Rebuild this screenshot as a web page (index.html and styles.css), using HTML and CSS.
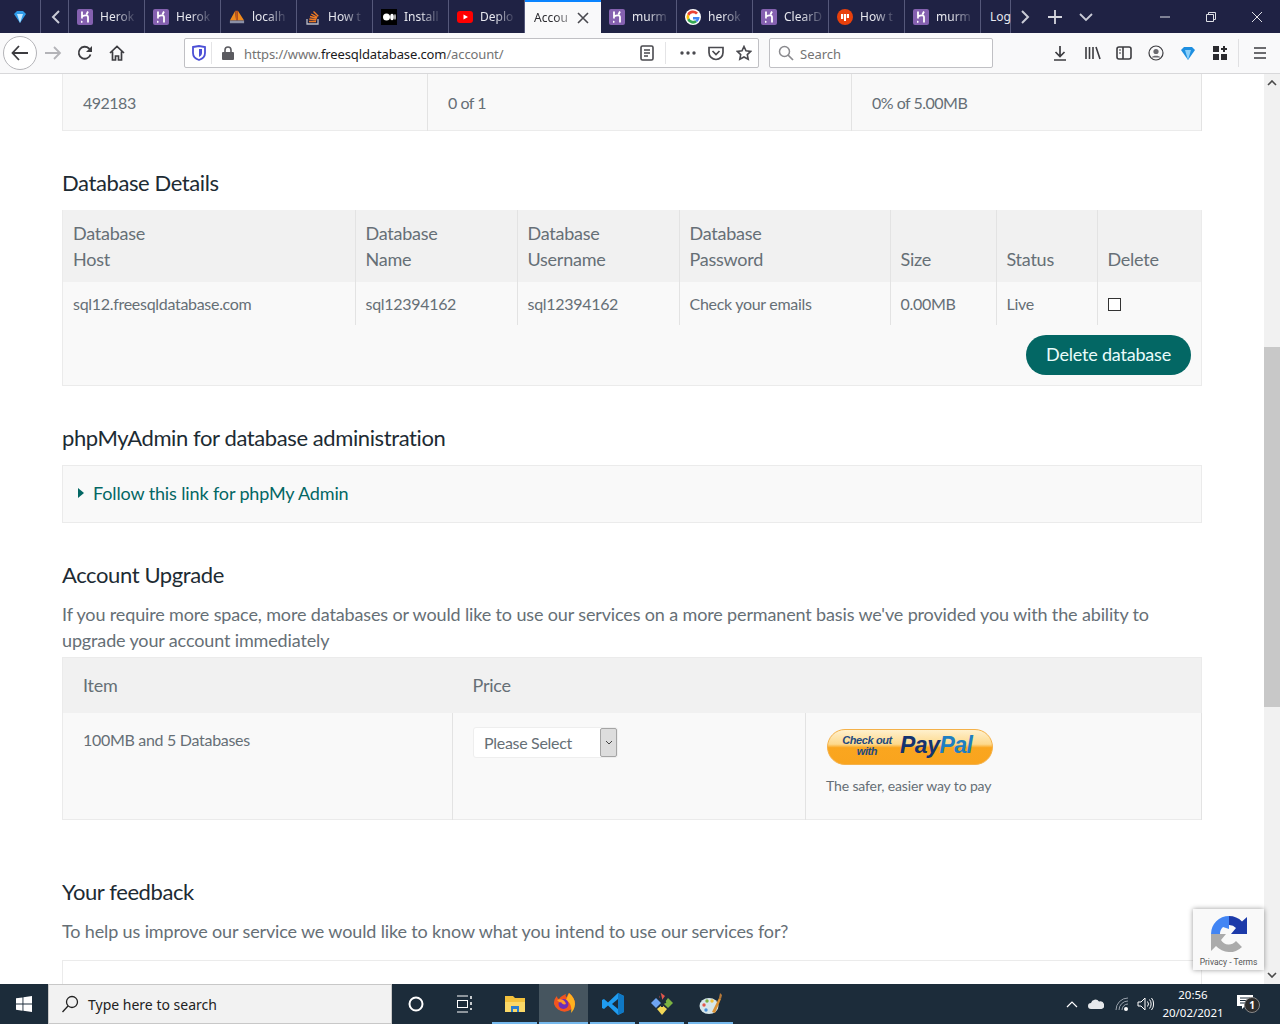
FILE: index.html
```html
<!DOCTYPE html>
<html lang="en">
<head>
  <meta charset="UTF-8">
  <title>Account - freesqldatabase.com</title>
  <link rel="stylesheet" href="styles.css">
</head>
<body>
  <svg class="defs" width="0" height="0">
    <symbol id="heroku" viewBox="0 0 16 16">
      <rect width="16" height="16" rx="2" fill="#8561b0"/>
      <path d="M5 2.500v7M5 7.500c2-1 6-2 6 .5v5.500M11 2.500L9.500 5.500" fill="none" stroke="#fff" stroke-width="1.800"/>
      <path d="M4 11.500l2.200 1.400L4 14z" fill="#fff"/>
    </symbol>
  </svg>

  <!-- tabs -->
  <div class="tabbar">
    <div class="pinned">
      <svg width="16" height="16" viewBox="0 0 16 16"><path d="M2 5l3-3h6l3 3-6 9z" fill="#2f9be8"/><path d="M5 5h6l-3 9z" fill="#bfe6ff"/></svg>
    </div>
    <div class="scroll-btn">
      <svg width="12" height="16" viewBox="0 0 12 16"><path d="M9 2L3 8l6 6" fill="none" stroke="#c9cbd6" stroke-width="2"/></svg>
    </div>
    <div class="tab"><svg width="16" height="16"><use href="#heroku"/></svg><span>Herok</span></div>
    <div class="tab"><svg width="16" height="16"><use href="#heroku"/></svg><span>Herok</span></div>
    <div class="tab">
      <svg width="16" height="16" viewBox="0 0 18 16"><path d="M1 12L7 1l1 11zM10 12l0-11 7 11z" fill="#f08a1d"/><path d="M7 1l3 0v11H8z" fill="#c4561a"/><rect x="1" y="12" width="16" height="3" fill="#8a8fa6"/></svg>
      <span>localh</span>
    </div>
    <div class="tab">
      <svg width="16" height="16" viewBox="0 0 16 16"><path d="M2 10v5h11v-5" fill="none" stroke="#b9bcc6" stroke-width="1.300"/><path d="M4 12.500h7M4.300 10l7 .8M5 7.500l6.800 1.800M6.300 5l6 3.300M8.500 2.500l4.800 4.800" stroke="#ef7b24" stroke-width="1.400"/></svg>
      <span>How t</span>
    </div>
    <div class="tab">
      <svg width="16" height="16" viewBox="0 0 16 16"><rect width="16" height="16" fill="#000"/><ellipse cx="5.500" cy="8" rx="3.500" ry="3.500" fill="#fff"/><ellipse cx="11" cy="8" rx="1.800" ry="3.200" fill="#fff"/><ellipse cx="14" cy="8" rx=".7" ry="3" fill="#fff"/></svg>
      <span>Install</span>
    </div>
    <div class="tab">
      <svg width="16" height="16" viewBox="0 0 16 16"><rect y="2" width="16" height="12" rx="3" fill="#f00"/><path d="M6.500 5.500L11 8l-4.500 2.500z" fill="#fff"/></svg>
      <span>Deplo</span>
    </div>
    <div class="tab tab-active"><span>Accou</span>
      <svg class="tab-close" width="12" height="12" viewBox="0 0 12 12"><path d="M1 1l10 10M11 1L1 11" stroke="#4a4a50" stroke-width="1.600"/></svg>
    </div>
    <div class="tab"><svg width="16" height="16"><use href="#heroku"/></svg><span>murm</span></div>
    <div class="tab">
      <svg width="16" height="16" viewBox="0 0 16 16"><circle cx="8" cy="8" r="8" fill="#fff"/><path d="M13 3.800A6.500 6.500 0 0 0 2.200 5l2.200 1.700A3.900 3.900 0 0 1 11 5.600z" fill="#ea4335"/><path d="M2.200 5a6.500 6.500 0 0 0 0 6l2.200-1.700a3.900 3.900 0 0 1 0-2.600z" fill="#fbbc05"/><path d="M2.200 11a6.500 6.500 0 0 0 10 2.100L10 11.300a3.900 3.900 0 0 1-5.600-2z" fill="#34a853"/><path d="M14.500 8H8v2.500h3.700A3 3 0 0 1 10 11.300l2.200 1.800c1.500-1.300 2.300-3 2.300-5.100z" fill="#4285f4"/></svg>
      <span>herok</span>
    </div>
    <div class="tab"><svg width="16" height="16"><use href="#heroku"/></svg><span>ClearD</span></div>
    <div class="tab">
      <svg width="16" height="16" viewBox="0 0 16 16"><circle cx="8" cy="8" r="8" fill="#e8400c"/><path d="M4 5h2.200v5H4zM7 5h2v7H7zM9.800 5H12v4H9.800z" fill="#fff"/></svg>
      <span>How t</span>
    </div>
    <div class="tab"><svg width="16" height="16"><use href="#heroku"/></svg><span>murm</span></div>
    <div class="tab tab-cut"><span>Log</span></div>
    <div class="tab-tools">
      <svg width="12" height="16" viewBox="0 0 12 16"><path d="M3 2l6 6-6 6" fill="none" stroke="#c9cbd6" stroke-width="2"/></svg>
      <svg width="14" height="14" viewBox="0 0 14 14"><path d="M7 0v14M0 7h14" stroke="#d5d6de" stroke-width="1.800"/></svg>
      <svg width="14" height="10" viewBox="0 0 14 10"><path d="M1 2l6 6 6-6" fill="none" stroke="#c9cbd6" stroke-width="1.800"/></svg>
    </div>
    <div class="win-btns">
      <svg width="12" height="12" viewBox="0 0 12 12"><path d="M1 6h10" stroke="#dfe0e6"/></svg>
      <svg width="12" height="12" viewBox="0 0 12 12"><path d="M3.500 3V1.500h7v7H9M1.500 3.500h7v7h-7z" fill="none" stroke="#dfe0e6"/></svg>
      <svg width="12" height="12" viewBox="0 0 12 12"><path d="M1 1l10 10M11 1L1 11" stroke="#dfe0e6"/></svg>
    </div>
  </div>

  <!-- toolbar -->
  <div class="toolbar">
    <div class="back-btn">
      <svg width="18" height="16" viewBox="0 0 18 16"><path d="M8 1L1.500 8 8 15M2 8h15" fill="none" stroke="#3c3c40" stroke-width="1.800"/></svg>
    </div>
    <svg class="tool fwd" width="18" height="16" viewBox="0 0 18 16"><path d="M10 2l6 6-6 6M16 8H1" fill="none" stroke="#b4b4b8" stroke-width="1.800"/></svg>
    <svg class="tool reload" width="16" height="16" viewBox="0 0 16 16"><path d="M13.500 9.500A6 6 0 1 1 12 3.500L14 6" fill="none" stroke="#3c3c40" stroke-width="1.800"/><path d="M15 1v6H9z" fill="#3c3c40"/></svg>
    <svg class="tool home" width="16" height="16" viewBox="0 0 16 16"><path d="M1 8l7-6.500L15 8M3.500 6.500V15h3v-4h3v4h3V6.500" fill="none" stroke="#3c3c40" stroke-width="1.700"/></svg>
    <div class="urlbar">
      <svg class="shield" width="14" height="16" viewBox="0 0 14 16"><path d="M1 2l6-1 6 1v6c0 4-3 6-6 7-3-1-6-3-6-7z" fill="none" stroke="#4b4fd6" stroke-width="1.800"/><path d="M7 4h3v4c0 2-1.500 3-3 4z" fill="#4b4fd6"/></svg>
      <span class="url-sep"></span>
      <svg class="lock" width="12" height="14" viewBox="0 0 12 14"><path d="M3 6V4a3 3 0 0 1 6 0v2" fill="none" stroke="#5b5b60" stroke-width="1.600"/><rect y="6" width="12" height="8" rx="1" fill="#5b5b60"/></svg>
      <span class="url-text">https://www.<b>freesqldatabase.com</b>/account/</span>
      <svg class="reader" width="14" height="16" viewBox="0 0 14 16"><rect x="1" y="1" width="12" height="14" rx="1.500" fill="none" stroke="#4a4a4f" stroke-width="1.600"/><path d="M4 5h6M4 8h6M4 11h4" stroke="#4a4a4f" stroke-width="1.300"/></svg>
      <span class="url-sep sep-wide"></span>
      <svg class="dots" width="16" height="4" viewBox="0 0 16 4"><circle cx="2" cy="2" r="1.700" fill="#4a4a4f"/><circle cx="8" cy="2" r="1.700" fill="#4a4a4f"/><circle cx="14" cy="2" r="1.700" fill="#4a4a4f"/></svg>
      <svg class="pocket" width="16" height="16" viewBox="0 0 16 16"><path d="M1 2.500h14v5a7 7 0 0 1-14 0z" fill="none" stroke="#4a4a4f" stroke-width="1.700"/><path d="M4.500 6L8 9.500 11.500 6" fill="none" stroke="#4a4a4f" stroke-width="1.700"/></svg>
      <svg class="star" width="16" height="16" viewBox="0 0 16 16"><path d="M8 1.500l2 4.300 4.700.6-3.400 3.200.9 4.700L8 12l-4.200 2.300.9-4.700L1.300 6.400 6 5.800z" fill="none" stroke="#4a4a4f" stroke-width="1.600"/></svg>
    </div>
    <div class="searchbar">
      <svg width="16" height="16" viewBox="0 0 16 16"><circle cx="6.500" cy="6.500" r="5" fill="none" stroke="#8a8a8e" stroke-width="1.500"/><path d="M10 10l5 5" stroke="#8a8a8e" stroke-width="1.700"/></svg>
      <span>Search</span>
    </div>
    <div class="tool-right">
      <svg width="16" height="16" viewBox="0 0 16 16"><path d="M8 1v10M3.500 7L8 11.500 12.500 7M2 15h12" fill="none" stroke="#3c3c40" stroke-width="1.700"/></svg>
      <svg width="17" height="16" viewBox="0 0 17 16"><path d="M2 2v12M5.500 2v12M9 2v12M12 2l4 12" fill="none" stroke="#3c3c40" stroke-width="1.600"/></svg>
      <svg class="sidebar-icon" width="16" height="14" viewBox="0 0 16 14"><rect x="1" y="1" width="14" height="12" rx="2" fill="none" stroke="#3c3c40" stroke-width="1.600"/><path d="M7 1v12" stroke="#3c3c40" stroke-width="1.600"/><path d="M3 4h2M3 7h2" stroke="#3c3c40"/></svg>
      <svg width="16" height="16" viewBox="0 0 16 16"><circle cx="8" cy="8" r="7" fill="none" stroke="#3c3c40" stroke-width="1.200"/><circle cx="8" cy="6.500" r="2.600" fill="#6a6a70"/><path d="M3.500 12.500c1-2.500 8-2.500 9 0z" fill="#6a6a70"/></svg>
      <svg width="16" height="16" viewBox="0 0 16 16"><path d="M1 5l3-3h8l3 3-7 10z" fill="#1e8fe0"/><path d="M5 5h6l-3 10z" fill="#8bd0fa"/></svg>
      <svg width="16" height="16" viewBox="0 0 16 16"><path d="M1 1h6v6H1zM1 9h6v6H1zM9 9h6v6H9z" fill="#2a2a2e"/><path d="M12 1v6M9 4h6" stroke="#2a2a2e" stroke-width="2"/></svg>
      <span class="tool-sep"></span>
      <svg class="menu-icon" width="14" height="12" viewBox="0 0 14 12"><path d="M1 1h12M1 6h12M1 11h12" stroke="#3c3c40" stroke-width="1.700"/></svg>
    </div>
  </div>

  <!-- page -->
  <div class="viewport">
    <div class="page">
      <table class="data stats">
        <tr>
          <td class="w-a">492183</td>
          <td class="w-b">0 of 1</td>
          <td>0% of 5.00MB</td>
        </tr>
      </table>

      <h2 class="h-details">Database Details</h2>
      <div class="details-box">
        <table class="data details">
          <tr>
            <th class="c1">Database<br>Host</th>
            <th class="c2">Database<br>Name</th>
            <th class="c3">Database<br>Username</th>
            <th class="c4">Database<br>Password</th>
            <th class="c5">Size</th>
            <th class="c6">Status</th>
            <th>Delete</th>
          </tr>
          <tr>
            <td>sql12.freesqldatabase.com</td>
            <td>sql12394162</td>
            <td>sql12394162</td>
            <td>Check your emails</td>
            <td>0.00MB</td>
            <td>Live</td>
            <td><span class="checkbox"></span></td>
          </tr>
        </table>
        <div class="box-foot"><a class="btn" href="#">Delete database</a></div>
      </div>

      <h2 class="h-php">phpMyAdmin for database administration</h2>
      <div class="link-box">
        <span class="arrow"></span>
        <a href="#">Follow this link for phpMy Admin</a>
      </div>

      <h2 class="h-upgrade">Account Upgrade</h2>
      <p class="lead">If you require more space, more databases or would like to use our services on a more permanent basis we've provided you with the ability to upgrade your account immediately</p>
      <table class="data upgrade">
        <tr>
          <th class="u1">Item</th>
          <th class="u2">Price</th>
          <th></th>
        </tr>
        <tr>
          <td>100MB and 5 Databases</td>
          <td>
            <div class="select">
              <span>Please Select</span>
              <span class="select-btn"><svg width="8" height="5" viewBox="0 0 8 5"><path d="M1 1l3 3 3-3" fill="none" stroke="#444"/></svg></span>
            </div>
          </td>
          <td>
            <svg class="paypal" width="166" height="36" viewBox="0 0 166 36">
              <defs>
                <linearGradient id="pp" x1="0" y1="0" x2="0" y2="1">
                  <stop offset="0" stop-color="#fff1cf"/>
                  <stop offset=".42" stop-color="#fdd98c"/>
                  <stop offset=".52" stop-color="#faa61f"/>
                  <stop offset="1" stop-color="#f9a41e"/>
                </linearGradient>
              </defs>
              <rect x=".5" y=".5" width="165" height="35" rx="17.500" fill="url(#pp)" stroke="#f4b14a"/>
              <text x="40" y="15" class="pp-small" text-anchor="middle">Check out</text>
              <text x="40" y="26" class="pp-small" text-anchor="middle">with</text>
              <text x="73" y="24" class="pp-logo"><tspan fill="#14336f">Pay</tspan><tspan fill="#1f7fc1">Pal</tspan></text>
            </svg>
            <p class="pp-note">The safer, easier way to pay</p>
          </td>
        </tr>
      </table>

      <h2 class="h-feedback">Your feedback</h2>
      <p class="lead one">To help us improve our service we would like to know what you intend to use our services for?</p>
      <div class="feedback-box"></div>
    </div>

    <div class="scrollbar">
      <svg class="sb-arrow" width="10" height="6" viewBox="0 0 10 6"><path d="M1 5l4-4 4 4" fill="none" stroke="#4a4a4a" stroke-width="1.600"/></svg>
      <div class="sb-thumb"></div>
      <svg class="sb-arrow" width="10" height="6" viewBox="0 0 10 6"><path d="M1 1l4 4 4-4" fill="none" stroke="#4a4a4a" stroke-width="1.600"/></svg>
    </div>

    <div class="recaptcha">
      <svg width="38" height="38" viewBox="0 0 38 38">
        <path d="M19 1A18 18 0 0 1 32 6.500L37 2V19H21L26 13A9 9 0 0 0 19 10Z" fill="#1c3aa9"/>
        <path d="M19 1A18 18 0 0 0 1 19H10A9 9 0 0 1 13 12L19 14V1Z" fill="#4285f4"/>
        <path d="M1 19H16L11 25A9 9 0 0 0 26 26L32 32A18 18 0 0 1 6 31L1 36Z" fill="#ababab"/>
      </svg>
      <div class="rc-links">Privacy - Terms</div>
    </div>
  </div>

  <!-- taskbar -->
  <div class="taskbar">
    <div class="start">
      <svg width="16" height="16" viewBox="0 0 16 16"><path d="M0 2.300l6.500-.9v6.200H0zM7.400 1.300L16 0v7.600H7.400zM0 8.500h6.500v6.200L0 13.700zM7.400 8.500H16V16l-8.600-1.200z" fill="#fff"/></svg>
    </div>
    <div class="task-search">
      <svg width="18" height="18" viewBox="0 0 18 18"><circle cx="11" cy="7" r="5.500" fill="none" stroke="#222" stroke-width="1.300"/><path d="M7 11l-5.500 6" stroke="#222" stroke-width="1.300"/></svg>
      <span>Type here to search</span>
    </div>
    <div class="task-item cortana">
      <svg width="16" height="16" viewBox="0 0 16 16"><circle cx="8" cy="8" r="6.500" fill="none" stroke="#fff" stroke-width="2"/></svg>
    </div>
    <div class="task-item view-item">
      <svg width="16" height="18" viewBox="0 0 16 18"><path d="M1 1h11M1 17h11" stroke="#fff"/><rect x="1.500" y="5.500" width="10" height="7" fill="none" stroke="#fff"/><path d="M15 1v3M15 7v3M15 13v2" stroke="#fff" stroke-width="1.500"/></svg>
    </div>
    <div class="task-item running">
      <svg width="22" height="20" viewBox="0 0 22 20"><path d="M1 2h8l2 2h10v14H1z" fill="#f3c13c"/><path d="M1 8h20v10H1z" fill="#fad867"/><path d="M7 12h8v6h-2v-3H9v3H7z" fill="#2a7fd0"/></svg>
    </div>
    <div class="task-item running active">
      <svg width="24" height="24" viewBox="0 0 24 24"><path d="M2 12C2 7 4 5 5 4c0 2 1 3 2 3 2-3 5-4 7-5-1 2 0 3 1 3 0-1 1-3 2-4 4 3 6 7 6 11a11 11 0 0 1-21 0z" fill="#f2551f"/><path d="M17 1c4 3 6 7 6 11 0 4-2 7-4 9 1-5 0-10-5-13z" fill="#ffb11f"/><circle cx="11.500" cy="12" r="5" fill="#6f2db8"/><path d="M5 8c4-2 8 0 9 4-2 1-4 0-5-2-1 1-2 0-4-2z" fill="#ff9a2a"/></svg>
    </div>
    <div class="task-item running">
      <svg width="24" height="24" viewBox="0 0 24 24"><path d="M17 1l6 3v16l-6 3L7 13.500 3 17l-2-1v-8l2-1 4 3.500z" fill="#1f9cf0"/><path d="M17 7l-6 5 6 5z" fill="#1c2c3a"/><path d="M17 1l6 3v16l-6 3z" fill="#0f78c4"/></svg>
    </div>
    <div class="task-item running">
      <svg width="24" height="24" viewBox="0 0 24 24"><path d="M11 1l4 3-3 4-3-3z" fill="#e2574c"/><path d="M6 6l5 5-5 5-5-5z" fill="#6ea4f0"/><path d="M18 6l5 5-5 5-4-4 1-2z" fill="#7cb342"/><path d="M7 17l5-4 5 4-5 6z" fill="#f2d757"/><path d="M10 2l2 9v4" fill="none" stroke="#1c2c3a" stroke-width="2"/><path d="M12 11l4-1" stroke="#1c2c3a" stroke-width="2"/></svg>
    </div>
    <div class="task-item running">
      <svg width="24" height="24" viewBox="0 0 24 24"><ellipse cx="10" cy="14" rx="9.500" ry="8" fill="#d6e6ea"/><circle cx="5" cy="13" r="1.700" fill="#e2574c"/><circle cx="8" cy="9" r="1.700" fill="#7cb342"/><circle cx="13" cy="9" r="1.700" fill="#f2c037"/><circle cx="7" cy="18" r="1.700" fill="#4a90d9"/><path d="M13 20L20 6l2 1-6 14z" fill="#d99033"/><path d="M20 6l1-5 2 2-1 4z" fill="#b5793a"/></svg>
    </div>
    <div class="tray">
      <svg width="12" height="8" viewBox="0 0 12 8"><path d="M1 7l5-5 5 5" fill="none" stroke="#fff" stroke-width="1.200"/></svg>
      <svg width="16" height="10" viewBox="0 0 16 10"><path d="M3 10a3 3 0 0 1 0-6 4.500 4.500 0 0 1 8-1.500A3.500 3.500 0 0 1 13.500 10z" fill="#e6e8eb"/></svg>
      <svg class="tray-wifi" width="14" height="14" viewBox="0 0 14 14"><path d="M1 13A12 12 0 0 1 13 1M4 13a9 9 0 0 1 9-9M7 13a6 6 0 0 1 6-6" fill="none" stroke="#9aa3ad"/><circle cx="11" cy="12" r="2" fill="#fff"/></svg>
      <svg width="17" height="14" viewBox="0 0 17 14"><path d="M1 5v4h3l4 4V1L4 5z" fill="none" stroke="#fff"/><path d="M10.500 4.500a4 4 0 0 1 0 5M12.500 2.500a7 7 0 0 1 0 9M14.500 1a9.500 9.500 0 0 1 0 12" fill="none" stroke="#fff"/></svg>
      <div class="clock"><div>20:56</div><div>20/02/2021</div></div>
      <div class="notify">
        <svg width="16" height="15" viewBox="0 0 16 15"><path d="M0 0h16v11H8l-3 3v-3H0z" fill="#fff"/><path d="M3 3h10M3 5.500h10M3 8h10" stroke="#1c2c3a"/></svg>
        <span class="notify-count">1</span>
      </div>
    </div>
  </div>
</body>
</html>
```

FILE: styles.css
```css
* {
  box-sizing: border-box;
}
html,
body {
  height: 100%;
}
body {
  margin: 0;
  width: 1280px;
  height: 1024px;
  overflow: hidden;
  display: flex;
  flex-direction: column;
  font-family: "Lato", "Liberation Sans", sans-serif;
  background-color: #fff;
}
.defs {
  position: absolute;
}

/* tab strip */
.tabbar {
  height: 40px;
  margin-bottom: -7px;
  display: flex;
  background-color: #1f2244;
  color: #e6e7ee;
  font-family: "Noto Sans", sans-serif;
  font-size: 12px;
}
.tabbar > div {
  height: 33px;
}
.pinned {
  width: 41px;
  padding-left: 12px;
  display: flex;
  align-items: center;
  border-right: 1px solid #55587a;
}
.scroll-btn {
  width: 28px;
  padding-left: 9px;
  display: flex;
  align-items: center;
  border-right: 1px solid #55587a;
}
.tab {
  width: 76px;
  flex: none;
  padding-left: 8px;
  display: flex;
  align-items: center;
  gap: 7px;
  border-right: 1px solid #55587a;
}
.tab svg {
  flex: none;
}
.tab span {
  white-space: nowrap;
  -webkit-mask-image: linear-gradient(to right, #000 45%, rgba(0, 0, 0, .15));
  mask-image: linear-gradient(to right, #000 45%, rgba(0, 0, 0, .15));
}
.tab-active {
  background-color: #f9f9fa;
  color: #2a2a2e;
  border-top: 2px solid #0a84ff;
  border-right: 0;
  padding-left: 9px;
  gap: 0;
}
.tab-active span {
  width: 43px;
}
.tab-cut {
  width: 30px;
  padding-left: 9px;
}
.tab-cut span {
  -webkit-mask-image: none;
  mask-image: none;
}
.tab-tools {
  width: 100px;
  padding-left: 8px;
  display: flex;
  align-items: center;
  gap: 17px;
}
.win-btns {
  margin-left: auto;
  padding-right: 17px;
  display: flex;
  align-items: center;
  gap: 34px;
}

/* nav toolbar */
.toolbar {
  height: 41px;
  flex: none;
  position: relative;
  display: flex;
  align-items: center;
  background-color: #f9f9fa;
  border-bottom: 1px solid #d8d8da;
}
.back-btn {
  width: 34px;
  height: 34px;
  margin-left: 3px;
  display: flex;
  align-items: center;
  justify-content: center;
  background-color: #fff;
  border: 1px solid #b4b4b8;
  border-radius: 50%;
}
.tool {
  flex: none;
}
.fwd {
  margin-left: 7px;
}
.reload {
  margin-left: 15px;
}
.home {
  margin-left: 16px;
}
.urlbar {
  width: 575px;
  height: 30px;
  margin-left: 59px;
  padding-left: 7px;
  display: flex;
  align-items: center;
  background-color: #fff;
  border: 1px solid #c0c0c4;
  border-radius: 2px;
  font-size: 13px;
  color: #737373;
  font-family: "Noto Sans", sans-serif;
}
.url-sep {
  width: 1px;
  height: 22px;
  margin-left: 5px;
  background-color: #e4e4e6;
}
.lock {
  margin-left: 10px;
}
.url-text {
  margin-left: 10px;
  margin-top: 2px;
  width: 396px;
  white-space: nowrap;
  letter-spacing: -.12px;
}
.url-text b {
  font-weight: 400;
  color: #1a1a1c;
}
.sep-wide {
  margin-left: 11px;
}
.dots {
  margin-left: 14px;
}
.pocket {
  margin-left: 12px;
}
.star {
  margin-left: 12px;
}
.searchbar {
  width: 224px;
  height: 30px;
  margin-left: 10px;
  padding-left: 8px;
  display: flex;
  align-items: center;
  gap: 6px;
  background-color: #fff;
  border: 1px solid #c0c0c4;
  border-radius: 2px;
  font-family: "Noto Sans", sans-serif;
  font-size: 13px;
  color: #737373;
}
.searchbar span {
  margin-top: 2px;
}
.tool-right {
  margin-left: 59px;
  display: flex;
  align-items: center;
  gap: 16px;
}
.sidebar-icon {
  margin-left: -1px;
}
.tool-sep {
  width: 1px;
  height: 28px;
  margin-left: -6px;
  background-color: #e0e0e2;
}
.menu-icon {
  margin-left: -2px;
}

/* page area */
.viewport {
  position: relative;
  flex: 1;
  min-height: 0;
  display: flex;
  overflow: hidden;
}
.page {
  flex: 1;
  padding-left: 62px;
  padding-right: 62px;
  color: #666f76;
  font-size: 16px;
}
h2 {
  margin: 0;
  font-size: 22px;
  font-weight: 400;
  line-height: 28px;
  letter-spacing: -.4px;
  color: #1d2b33;
}
.h-details {
  margin-top: 38px;
  margin-bottom: 13px;
}
.h-php {
  margin-top: 38px;
  margin-bottom: 13px;
}
.h-upgrade {
  margin-top: 38px;
  margin-bottom: 12px;
}
.h-feedback {
  margin-top: 58px;
  margin-bottom: 12px;
}
.lead {
  margin: 0 0 4px;
  font-size: 18px;
  line-height: 26px;
  letter-spacing: -.14px;
}
.lead.one {
  margin-bottom: 16px;
}
table.data {
  width: 100%;
  table-layout: fixed;
  border-collapse: collapse;
}
.data th {
  background-color: #f1f1f1;
  font-weight: 400;
  font-size: 18px;
  line-height: 26px;
  letter-spacing: -.25px;
  text-align: left;
  vertical-align: bottom;
}
.data td {
  background-color: #f9f9f9;
  vertical-align: top;
  letter-spacing: -.3px;
}

.stats {
  border: 1px solid #ebebeb;
  border-top: 0;
}
.stats td {
  height: 56px;
  padding: 19px 20px 0;
  border-right: 1px solid #e3e3e3;
  letter-spacing: -.5px;
}
.w-a {
  width: 365px;
}
.w-b {
  width: 424px;
}

.details-box {
  background-color: #f9f9f9;
  border: 1px solid #ebebeb;
  border-top: 0;
}
.details th {
  padding: 10px 10px 10px;
  border-right: 1px solid #e3e3e3;
}
.details td {
  height: 43px;
  padding: 12px 10px 0;
  border-right: 1px solid #e3e3e3;
}
.details td:last-child,
.details th:last-child {
  border-right: 0;
}
.c1 {
  width: 292px;
}
.c2 {
  width: 162px;
}
.c3 {
  width: 162px;
}
.c4 {
  width: 211px;
}
.c5 {
  width: 106px;
}
.c6 {
  width: 101px;
}
.checkbox {
  display: block;
  width: 13px;
  height: 13px;
  margin-top: 4px;
  background-color: #fff;
  border: 1px solid #333;
}
.box-foot {
  height: 60px;
  padding-top: 10px;
  padding-right: 10px;
  display: flex;
  justify-content: flex-end;
}
.btn {
  height: 40px;
  padding: 0 20px 2px;
  display: flex;
  align-items: center;
  background-color: #036764;
  color: #eafcfb;
  border-radius: 20px;
  font-size: 18px;
  letter-spacing: -.2px;
  text-decoration: none;
}

.link-box {
  height: 58px;
  padding-left: 15px;
  padding-bottom: 2px;
  display: flex;
  align-items: center;
  gap: 9px;
  background-color: #f9f9f9;
  border: 1px solid #ebebeb;
  font-size: 18px;
  letter-spacing: -.13px;
}
.link-box a {
  color: #036764;
  text-decoration: none;
}
.arrow {
  width: 0;
  height: 0;
  border-left: 6px solid #036764;
  border-top: 5px solid transparent;
  border-bottom: 5px solid transparent;
}

.upgrade {
  border: 1px solid #ebebeb;
}
.upgrade th {
  height: 56px;
  padding: 0 20px;
  vertical-align: middle;
}
.upgrade td {
  height: 106px;
  padding: 17px 20px 0;
  border-right: 1px solid #e3e3e3;
}
.u1 {
  width: 390px;
}
.u2 {
  width: 353px;
}
.select {
  width: 145px;
  height: 31px;
  margin-top: -3px;
  padding-left: 10px;
  display: flex;
  align-items: center;
  justify-content: space-between;
  background-color: #fff;
  border: 1px solid #eee;
  border-radius: 3px;
}
.select-btn {
  width: 17px;
  height: 29px;
  display: flex;
  align-items: center;
  justify-content: center;
  background-color: #ddd;
  border: 1px solid #a5a5a5;
  border-radius: 2px;
}
.paypal {
  display: block;
  margin-top: -1px;
  margin-left: 1px;
}
.pp-small {
  font-family: "Liberation Sans", sans-serif;
  font-size: 11px;
  font-style: italic;
  font-weight: 700;
  letter-spacing: -.4px;
  fill: #1f4a80;
}
.pp-logo {
  font-family: "Liberation Sans", sans-serif;
  font-size: 23px;
  font-style: italic;
  font-weight: 700;
  letter-spacing: -.5px;
}
.pp-note {
  margin: 12px 0 0;
  font-size: 14px;
  letter-spacing: -.13px;
}
.feedback-box {
  height: 60px;
  background-color: #fff;
  border: 1px solid #ebebeb;
}

/* scrollbar */
.scrollbar {
  width: 16px;
  flex: none;
  position: relative;
  display: flex;
  flex-direction: column;
  align-items: center;
  justify-content: space-between;
  padding: 6px 0;
  background-color: #f1f1f1;
}
.sb-thumb {
  position: absolute;
  top: 273px;
  left: 0;
  width: 16px;
  height: 360px;
  background-color: #c8c8c8;
}

/* recaptcha badge */
.recaptcha {
  position: absolute;
  top: 835px;
  left: 1193px;
  width: 71px;
  height: 61px;
  padding-top: 6px;
  display: flex;
  flex-direction: column;
  align-items: center;
  background-color: #f9f9f9;
  box-shadow: 0 0 5px rgba(0, 0, 0, .4);
}
.rc-links {
  margin-top: 4px;
  font-family: "Roboto", sans-serif;
  font-size: 8.500px;
  color: #555;
  white-space: nowrap;
}

/* windows taskbar */
.taskbar {
  height: 40px;
  flex: none;
  display: flex;
  align-items: center;
  background-color: #1c2c3a;
  color: #fff;
  font-family: "Noto Sans", sans-serif;
}
.start {
  width: 48px;
  display: flex;
  justify-content: center;
}
.task-search {
  width: 344px;
  height: 40px;
  padding-left: 12px;
  display: flex;
  align-items: center;
  gap: 9px;
  background-color: #f2f2f2;
  border: 1px solid #c8c8c8;
  color: #222;
  font-size: 14px;
}
.task-item {
  width: 49px;
  height: 40px;
  position: relative;
  display: flex;
  align-items: center;
  justify-content: center;
}
.cortana {
  margin-left: -1px;
}
.view-item {
  margin-left: -1px;
  margin-right: 2px;
}
.running::after {
  content: "";
  position: absolute;
  left: 2px;
  right: 2px;
  bottom: 0;
  height: 2px;
  background-color: #76b9ed;
}
.active {
  background-color: #46555f;
}
.active::after {
  left: 0;
  right: 0;
}
.tray {
  margin-left: auto;
  height: 40px;
  display: flex;
  align-items: center;
  gap: 10px;
  padding-right: 19px;
}
.tray-wifi {
  margin-left: 1px;
  margin-right: -2px;
}
.clock {
  width: 68px;
  margin-left: -5px;
  text-align: center;
  font-size: 11.500px;
  line-height: 18px;
}
.notify {
  position: relative;
  width: 24px;
}
.notify-count {
  position: absolute;
  top: 4px;
  left: 7px;
  width: 16px;
  height: 16px;
  border-radius: 50%;
  background-color: #2c2c2c;
  border: 1px solid #888;
  font-size: 10px;
  font-weight: 700;
  line-height: 14px;
  text-align: center;
}
```
